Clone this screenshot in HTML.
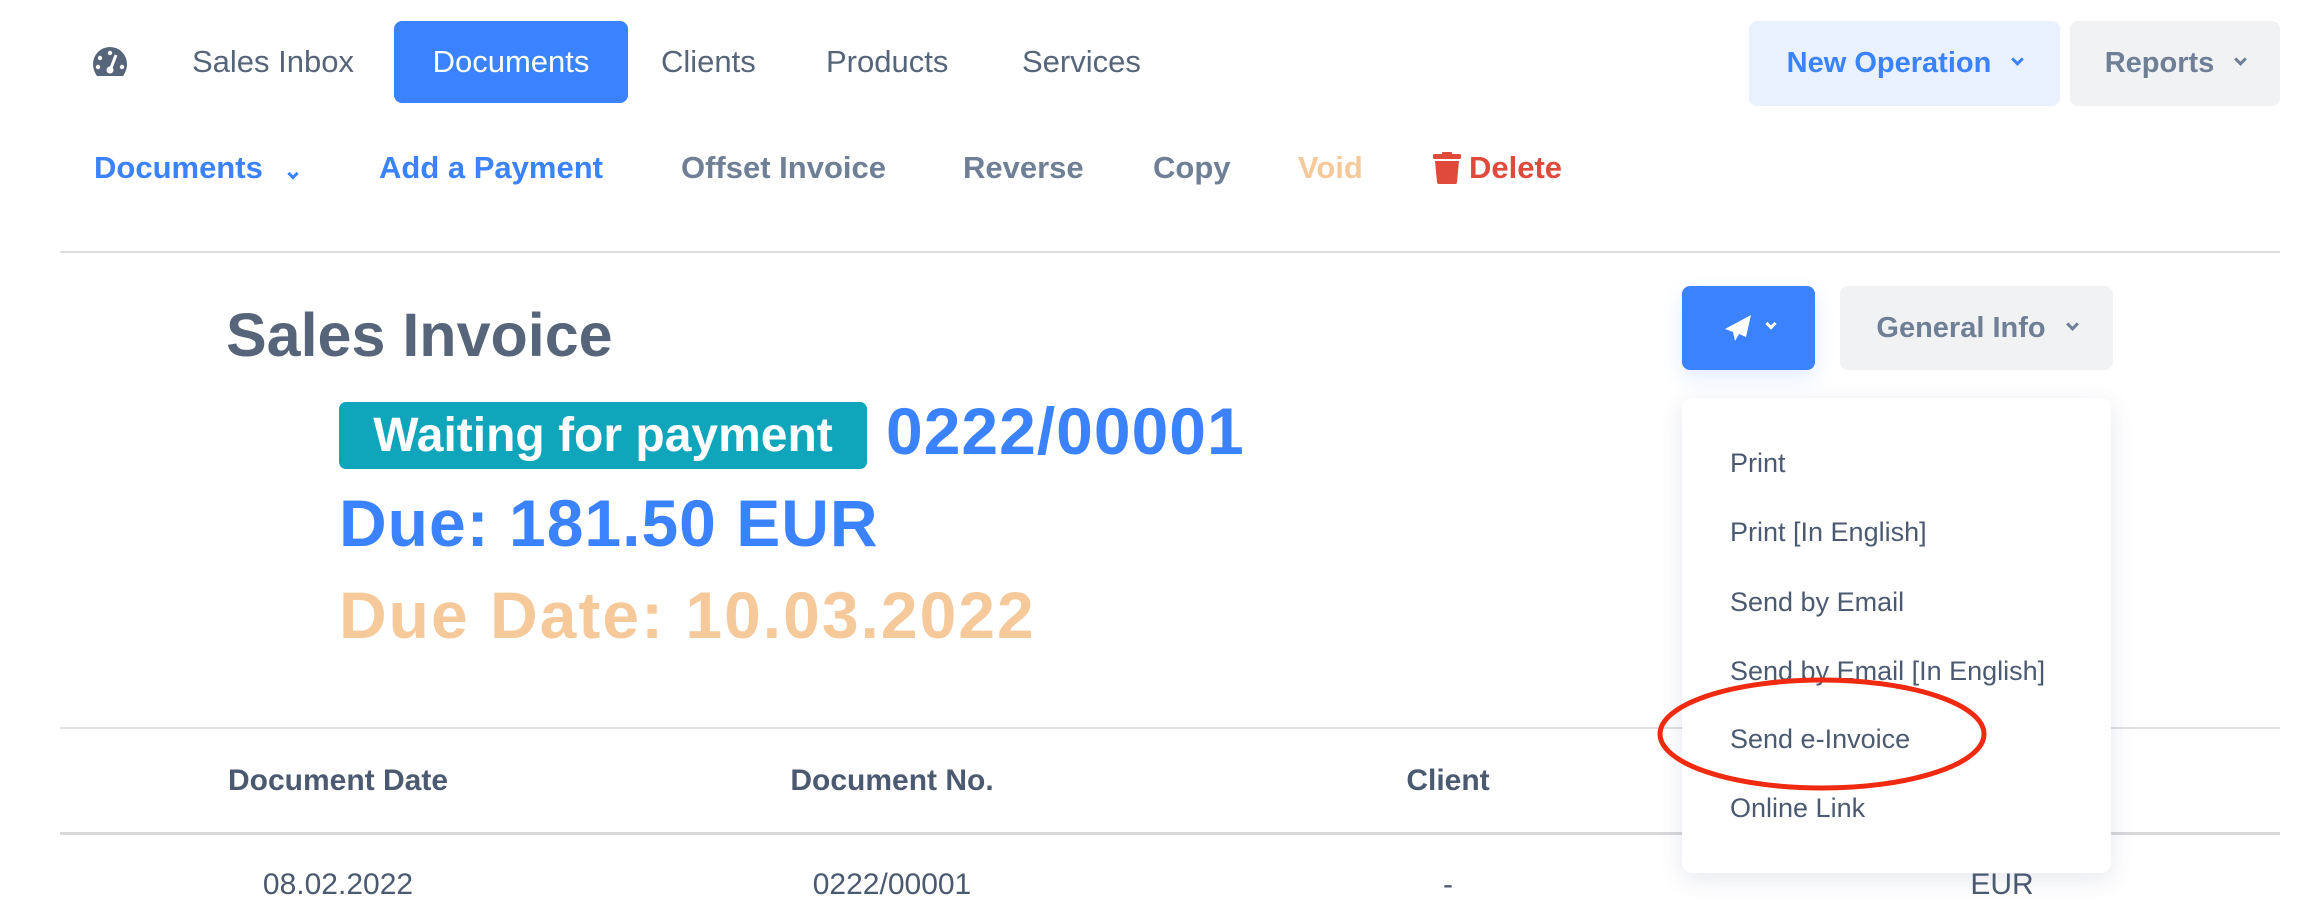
<!DOCTYPE html>
<html><head><meta charset="utf-8"><style>
*{margin:0;padding:0;box-sizing:border-box}
body{width:2312px;height:898px;background:#fff;font-family:"Liberation Sans",sans-serif;position:relative;overflow:hidden;color:#56657a}
.a{position:absolute;white-space:nowrap}
.nav{font-size:31px;color:#56657a;top:42px;line-height:40px}
.row2{font-size:31px;font-weight:bold;top:148px;line-height:40px}
.btn{position:absolute;border-radius:8px;display:flex;align-items:center;justify-content:center;font-size:29px;font-weight:bold}
.chev{display:inline-block;width:9px;height:9px;border-right:3px solid currentColor;border-bottom:3px solid currentColor;transform:rotate(45deg);margin-left:22px;margin-top:-8px}
.mi{position:absolute;left:1730px;font-size:27px;color:#4b5a70;line-height:34px}
.th{position:absolute;top:764px;font-size:30px;font-weight:bold;color:#4b5a70;transform:translateX(-50%)}
.td{position:absolute;top:868px;font-size:30px;color:#4b5a70;transform:translateX(-50%)}
.big{font-size:66px;font-weight:bold;line-height:76px;letter-spacing:1px}
</style></head><body>
<svg class="a" style="left:92px;top:46px" width="36" height="32" viewBox="0 0 36 32"><path d="M18 1A17 17 0 0 0 1 18c0 5 2 9 4 12h26c2-3 4-7 4-12A17 17 0 0 0 18 1z" fill="#56657a"/><circle cx="18" cy="7" r="2.2" fill="#fff"/><circle cx="8" cy="12" r="2.2" fill="#fff"/><circle cx="6" cy="21" r="2.2" fill="#fff"/><circle cx="30" cy="21" r="2.2" fill="#fff"/><path d="M24 9l-5 13" stroke="#fff" stroke-width="3"/><circle cx="18" cy="24" r="3.5" fill="#fff"/></svg>
<div class="a nav" style="left:192px">Sales Inbox</div>
<div class="btn" style="left:394px;top:21px;width:234px;height:82px;background:#3b82fe;color:#fff;font-weight:normal;font-size:31px">Documents</div>
<div class="a nav" style="left:661px">Clients</div>
<div class="a nav" style="left:826px">Products</div>
<div class="a nav" style="left:1022px">Services</div>

<div class="btn" style="left:1749px;top:21px;width:311px;height:85px;background:#e9f1fe;color:#3b82fe">New Operation<span class="chev"></span></div>
<div class="btn" style="left:2070px;top:21px;width:210px;height:85px;background:#f1f2f4;color:#6e7f96">Reports<span class="chev"></span></div>

<div class="a row2" style="left:94px;color:#3b82fe">Documents<span class="chev" style="margin-left:26px;width:8px;height:8px"></span></div>
<div class="a row2" style="left:379px;color:#3b82fe">Add a Payment</div>
<div class="a row2" style="left:681px;color:#6e7f96">Offset Invoice</div>
<div class="a row2" style="left:963px;color:#6e7f96">Reverse</div>
<div class="a row2" style="left:1153px;color:#6e7f96">Copy</div>
<div class="a row2" style="left:1298px;color:#f5c99a">Void</div>
<svg class="a" style="left:1433px;top:152px" width="28" height="32" viewBox="0 0 28 32"><rect x="0" y="2" width="28" height="5" rx="1.5" fill="#e04a3a"/><rect x="9" y="0" width="10" height="4" rx="1" fill="#e04a3a"/><path d="M2 9h24l-2 21a2 2 0 0 1-2 2H6a2 2 0 0 1-2-2z" fill="#e04a3a"/></svg>
<div class="a row2" style="left:1469px;color:#e04a3a">Delete</div>

<div class="a" style="left:60px;top:251px;width:2220px;height:2px;background:#dedfe1"></div>

<div class="a" style="left:226px;top:299px;font-size:61px;font-weight:bold;color:#56657a;line-height:72px">Sales Invoice</div>
<div class="a" style="left:339px;top:402px;width:528px;height:67px;background:#0fa5bb;border-radius:7px;color:#fff;font-size:48px;font-weight:bold;line-height:67px;text-align:center">Waiting for payment</div>
<div class="a big" style="left:886px;top:393px;color:#3b82fe">0222/00001</div>
<div class="a big" style="left:339px;top:485px;color:#3b82fe">Due: 181.50 EUR</div>
<div class="a big" style="left:339px;top:577px;color:#f5c99a;letter-spacing:2px">Due Date: 10.03.2022</div>

<div class="a" style="left:60px;top:727px;width:2220px;height:2px;background:#dedfe1"></div>
<div class="th" style="left:338px">Document Date</div>
<div class="th" style="left:892px">Document No.</div>
<div class="th" style="left:1448px">Client</div>
<div class="a" style="left:60px;top:832px;width:2220px;height:3px;background:#d8d9db"></div>
<div class="td" style="left:338px">08.02.2022</div>
<div class="td" style="left:892px">0222/00001</div>
<div class="td" style="left:1448px">-</div>
<div class="td" style="left:2002px">EUR</div>

<div class="btn" style="left:1682px;top:286px;width:133px;height:84px;background:#3b82fe;color:#fff;box-shadow:0 8px 20px rgba(59,130,254,.15)">
<svg width="30" height="30" viewBox="0 0 30 30"><path d="M28 2L2 16l8 3 2 9 4-7 7 3z" fill="#fff"/></svg><span class="chev" style="margin-left:14px;width:8px;height:8px"></span></div>
<div class="btn" style="left:1840px;top:286px;width:273px;height:84px;background:#f1f2f4;color:#6e7f96">General Info<span class="chev"></span></div>

<div class="a" style="left:1682px;top:398px;width:429px;height:475px;background:#fff;border-radius:10px;box-shadow:0 6px 24px rgba(60,80,130,.13)"></div>
<div class="mi" style="top:446px">Print</div>
<div class="mi" style="top:515px">Print [In English]</div>
<div class="mi" style="top:585px">Send by Email</div>
<div class="mi" style="top:654px">Send by Email [In English]</div>
<div class="mi" style="top:722px">Send e-Invoice</div>
<div class="mi" style="top:791px">Online Link</div>

<svg class="a" style="left:0;top:0" width="2312" height="898"><ellipse cx="1822" cy="734" rx="162" ry="54" fill="none" stroke="#f02a10" stroke-width="5"/></svg>
</body></html>
